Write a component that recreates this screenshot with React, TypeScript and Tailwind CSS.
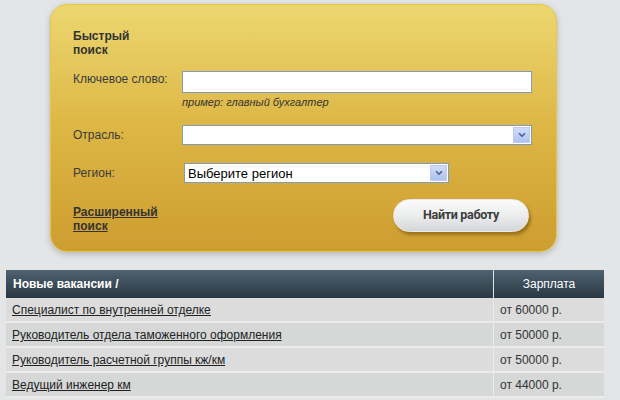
import { ChevronDown } from "lucide-react"

const vacancies = [
  { title: "Специалист по внутренней отделке", salary: "от 60000 р." },
  { title: "Руководитель отдела таможенного оформления", salary: "от 50000 р." },
  { title: "Руководитель расчетной группы кж/км", salary: "от 50000 р." },
  { title: "Ведущий инженер км", salary: "от 44000 р." },
]

function SelectBox({ width, value }: { width: string; value?: string }) {
  return (
    <div
      className={`${width} flex h-[20px] items-center border border-[#7f9db9] bg-white`}
    >
      <span className="flex-1 pl-[3px] text-[13px] leading-none text-black">
        {value}
      </span>
      <span className="mr-[1px] flex h-[16px] w-[17px] items-center justify-center border border-[#bccbee] bg-gradient-to-b from-[#d0dcfa] to-[#aec3f3]">
        <ChevronDown className="h-[10px] w-[10px] text-[#4d6185]" strokeWidth={4} />
      </span>
    </div>
  )
}

export default function App() {
  return (
    <div
      className="h-[400px] w-[620px] overflow-hidden bg-[#e4e5e6] pt-[4px]"
      style={{ fontFamily: '"Liberation Sans", Arial, sans-serif' }}
    >
      {/* Quick search panel */}
      <div className="ml-[50px] h-[248px] w-[507px] rounded-[17px] border border-[#e4c54a] bg-gradient-to-b from-[#ecd76f] via-[#ddb644] to-[#cd9d30] shadow-[0_2px_6px_rgba(0,0,0,0.22)]">
        <div className="ml-[22px] mt-[24px] w-[60px] text-[12px] font-bold leading-[14px] text-[#333]">
          Быстрый поиск
        </div>

        <div className="ml-[22px] mt-[14px] flex items-start">
          <span className="w-[109px] pt-[1px] text-[12px] leading-[15px] text-[#3a3a3a]">
            Ключевое слово:
          </span>
          <div className="h-[22px] w-[350px] border border-[#7f9db9] bg-white" />
        </div>
        <div className="ml-[131px] mt-[3px] text-[11px] italic leading-[13px] text-[#333]">
          пример: главный бухгалтер
        </div>

        <div className="ml-[22px] mt-[16px] flex items-center">
          <span className="w-[109px] text-[12px] leading-[15px] text-[#3a3a3a]">
            Отрасль:
          </span>
          <SelectBox width="w-[350px]" />
        </div>

        <div className="ml-[22px] mt-[18px] flex items-center">
          <span className="w-[111px] text-[12px] leading-[15px] text-[#3a3a3a]">
            Регион:
          </span>
          <SelectBox width="w-[265px]" value="Выберите регион" />
        </div>

        <div className="ml-[22px] mr-[27px] mt-[16px] flex items-start justify-between">
          <a
            href="#"
            className="mt-[6px] w-[90px] text-[12px] font-bold leading-[14px] text-[#333] underline"
          >
            Расширенный поиск
          </a>
          <button
            className="flex h-[33px] w-[136px] items-center justify-center rounded-full border border-[#e9e9e9] bg-gradient-to-b from-[#fbfbfb] via-[#eceded] to-[#d3d6d8] text-[12.5px] font-bold tracking-[-0.3px] text-[#3c3c3c] shadow-[2px_3px_3px_rgba(90,60,0,0.45)]"
            style={{ fontFamily: "Roboto, Arial, sans-serif" }}
          >
            Найти работу
          </button>
        </div>
      </div>

      {/* Vacancies table */}
      <div className="ml-[6px] mt-[18px] w-[598px]">
        <div className="flex h-[28px] bg-gradient-to-b from-[#4f6371] to-[#2a3843] text-[12px] text-white">
          <div className="flex w-[487px] items-center pl-[7px] font-bold">
            Новые вакансии /
          </div>
          <div className="w-[1px] bg-[#dfe3e6]" />
          <div className="flex flex-1 items-center justify-center">Зарплата</div>
        </div>
        {vacancies.map((v, i) => (
          <div
            key={v.title}
            className={`flex h-[25px] border-b-2 border-[#ebebeb] text-[12px] ${
              i % 2 === 0 ? "bg-[#dcdcdc]" : "bg-[#d6d8d8]"
            }`}
          >
            <div className="flex w-[487px] items-center pl-[6px] pt-[1px]">
              <a href="#" className="text-[#222] underline">
                {v.title}
              </a>
            </div>
            <div className="w-[1px] bg-[#ebebeb]" />
            <div className="flex flex-1 items-center pl-[6px] pt-[1px] text-[#333]">
              {v.salary}
            </div>
          </div>
        ))}
      </div>
    </div>
  )
}
